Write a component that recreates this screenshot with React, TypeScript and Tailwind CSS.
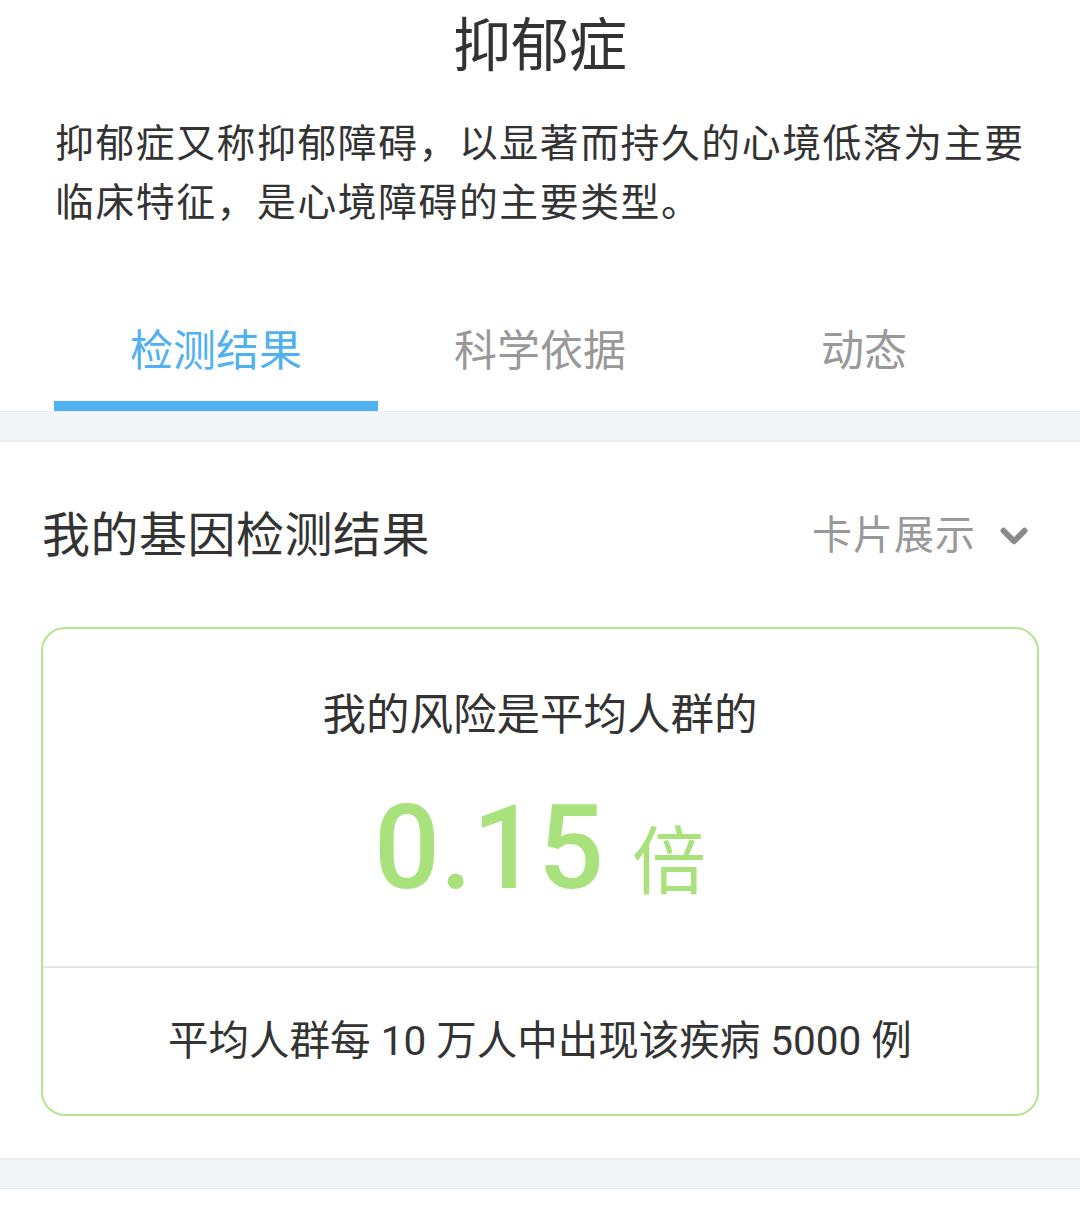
import { ChevronDown } from "lucide-react";

const tabs = ["检测结果", "科学依据", "动态"];

export default function App() {
  return (
    <div
      className="w-[1080px] bg-white text-[#333]"
      style={{ fontFamily: 'Roboto, "Noto Sans CJK SC", sans-serif' }}
    >
      {/* header */}
      <div className="pt-[8px] text-center text-[58px] leading-[76px]">抑郁症</div>
      <div className="mt-[30px] px-[55px] text-[38.8px] tracking-[1.6px] leading-[59px] whitespace-nowrap">
        抑郁症又称抑郁障碍，以显著而持久的心境低落为主要
        <br />
        临床特征，是心境障碍的主要类型。
      </div>

      {/* tabs */}
      <div className="mt-[69px] border-b border-[#e6e9ed]">
        <div className="grid grid-cols-3 px-[54px]">
          {tabs.map((t, i) => (
            <div key={t} className="flex flex-col items-center">
              <div
                className={
                  "h-[100px] flex items-center text-[43px] " +
                  (i === 0 ? "text-[#4fb0f2]" : "text-[#999]")
                }
              >
                {t}
              </div>
              <div className={"h-[10px] w-full " + (i === 0 ? "bg-[#4fb0f2]" : "")} />
            </div>
          ))}
        </div>
      </div>
      <div className="h-[30px] bg-[#f3f6f9] border-b border-[#e6e9ed]" />

      {/* result */}
      <div className="flex items-center justify-between pl-[42px] pr-[45px] pt-[64px] h-[124px]">
        <div className="text-[48px] tracking-[0.5px] leading-[60px]">我的基因检测结果</div>
        <div className="flex items-center gap-[17px] text-[#999] text-[40px] tracking-[1px]">
          <span>卡片展示</span>
          <ChevronDown size={42} strokeWidth={3.4} className="text-[#8a8a8a]" />
        </div>
      </div>

      <div className="mt-[61px] mx-[41px] rounded-[24px] border-2 border-[#b6e38f]">
        <div className="h-[337px] flex flex-col items-center pt-[59px]">
          <div className="text-[43.5px] leading-[56px]">我的风险是平均人群的</div>
          <div className="mt-[44px] flex items-baseline text-[#a9e27c] leading-[120px]">
            <span className="text-[116px] font-medium">0.15</span>
            <span className="ml-[28px] text-[74px]">倍</span>
          </div>
        </div>
        <div className="h-[148px] border-t-2 border-[#e6e6e6] flex items-center justify-center text-[40.5px]">
          平均人群每 10 万人中出现该疾病 5000 例
        </div>
      </div>

      <div className="mt-[42px] h-[31px] bg-[#f3f6f9] border-y border-[#e6e9ed]" />
      <div className="h-[31px]" />
    </div>
  );
}
